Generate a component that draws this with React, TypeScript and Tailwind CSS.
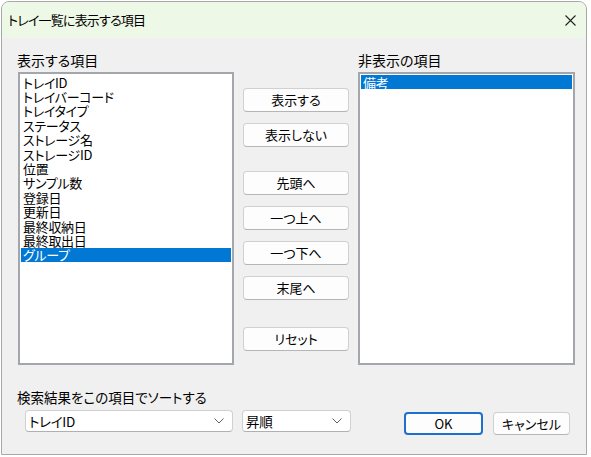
import { useState } from 'react';

const shown = [
  'トレイID',
  'トレイバーコード',
  'トレイタイプ',
  'ステータス',
  'ストレージ名',
  'ストレージID',
  '位置',
  'サンプル数',
  '登録日',
  '更新日',
  '最終収納日',
  '最終取出日',
  'グループ',
];

const hidden = ['備考'];

const font = "font-['Noto_Sans_CJK_JP','Noto_Sans',sans-serif] [font-feature-settings:'palt']";

function ListBox({ items, selected }: { items: string[]; selected: number }) {
  return (
    <div className="h-[293px] border-2 border-[#a3a6aa] bg-white p-px">
      {items.map((item, i) => (
        <div
          key={item}
          className={`flex h-[14.4px] items-center pl-[2px] text-[13px] leading-none tracking-[-0.3px] ${
            i === selected ? 'bg-[#0078d4] text-white' : 'text-black'
          }`}
        >
          {item}
        </div>
      ))}
    </div>
  );
}

function Button({ label, className = '' }: { label: string; className?: string }) {
  return (
    <button
      className={`flex h-[24px] w-[106px] items-center justify-center rounded-[4px] border border-[#d0d0d0] border-b-[#b5b5b5] bg-[#fdfdfd] text-[13px] text-black ${className}`}
    >
      {label}
    </button>
  );
}

function Chevron() {
  return (
    <svg width="10" height="6" viewBox="0 0 10 6" className="shrink-0">
      <path d="M0.5 0.5 L5 5 L9.5 0.5" fill="none" stroke="#606060" strokeWidth="1" />
    </svg>
  );
}

function Select({ value, width }: { value: string; width: string }) {
  return (
    <div
      className={`flex h-[22px] ${width} items-center justify-between rounded-[4px] border border-[#d0d0d0] border-b-[#b0b0b0] bg-white pl-[3px] pr-[8px] text-[13.5px] tracking-[-0.3px] text-black`}
    >
      <span>{value}</span>
      <Chevron />
    </div>
  );
}

export default function App() {
  const [sel] = useState(12);

  return (
    <div className={`h-[457px] w-[591px] bg-white p-px ${font}`}>
      <div className="flex h-[454px] w-[586px] flex-col overflow-hidden rounded-t-[8px] border border-[#a8a8a8] bg-[#f0f0f0]">
        <div className="flex h-[36px] shrink-0 items-center justify-between bg-[#eef8e6] pl-[6px] pr-[10px]">
          <span className="text-[13px] tracking-[-0.8px] text-black">トレイ一覧に表示する項目</span>
          <svg width="11" height="11" viewBox="0 0 11 11">
            <path d="M0.5 0.5 L10.5 10.5 M10.5 0.5 L0.5 10.5" stroke="#222" strokeWidth="1.1" />
          </svg>
        </div>

        <div className="flex flex-1 flex-col pl-[16px] pr-[10px] pt-[12px]">
          <div className="flex gap-[9px]">
            <div className="flex w-[216px] flex-col">
              <div className="-ml-px h-[22px] text-[14px] leading-[20px] text-black">表示する項目</div>
              <ListBox items={shown} selected={sel} />
            </div>

            <div className="flex flex-col pt-[38px]">
              <Button label="表示する" />
              <Button label="表示しない" className="mt-[11px]" />
              <Button label="先頭へ" className="mt-[24px]" />
              <Button label="一つ上へ" className="mt-[11px]" />
              <Button label="一つ下へ" className="mt-[11px]" />
              <Button label="末尾へ" className="mt-[11px]" />
              <Button label="リセット" className="mt-[27px]" />
            </div>

            <div className="flex w-[217px] flex-col">
              <div className="h-[22px] text-[14px] leading-[20px] text-black">非表示の項目</div>
              <ListBox items={hidden} selected={0} />
            </div>
          </div>

          <div className="-ml-px mt-[22px] h-[23px] text-[13.5px] leading-[20px] text-black">
            検索結果をこの項目でソートする
          </div>

          <div className="flex items-start">
            <div className="ml-[7px] flex gap-[9px]">
              <Select value="トレイID" width="w-[208px]" />
              <Select value="昇順" width="w-[109px]" />
            </div>
            <div className="ml-[53px] mt-[2px] flex gap-[10px]">
              <button className="flex h-[23px] w-[79px] items-center justify-center rounded-[4px] border-2 border-[#1f6fcf] bg-[#fdfdfd] text-[13px] text-black">
                OK
              </button>
              <button className="flex h-[23px] w-[77px] items-center justify-center rounded-[4px] border border-[#d0d0d0] border-b-[#b5b5b5] bg-[#fdfdfd] text-[13px] text-black">
                キャンセル
              </button>
            </div>
          </div>
        </div>
      </div>
    </div>
  );
}
